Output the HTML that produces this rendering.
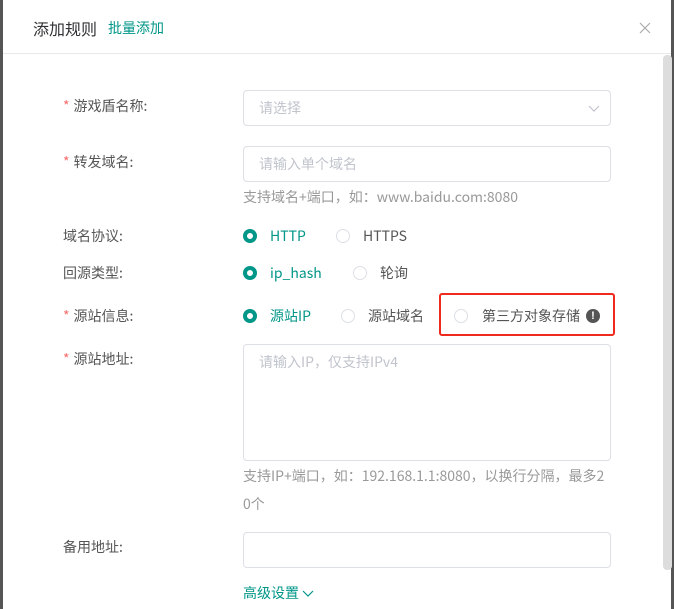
<!DOCTYPE html><html><head><meta charset="utf-8"><style>
*{box-sizing:border-box;margin:0;padding:0}
body{width:674px;height:609px;overflow:hidden;background:#555;font-family:"Noto Sans CJK SC","Liberation Sans",sans-serif;position:relative}
.m{position:absolute;left:3px;top:0;width:668px;height:609px;background:#fff}
.a{position:absolute;font-size:14px;white-space:nowrap;line-height:20px}
.lbl{color:#555;}
.s{color:#f56c6c;margin-right:4px}
.in{position:absolute;left:240px;width:368px;border:1px solid #dcdfe6;border-radius:4px;background:#fff}
.ph{color:#c0c4cc}
.r{position:absolute;width:14px;height:14px;border-radius:50%;border:1px solid #dcdfe6;background:#fff}
.r.on{border:4px solid #009688;background:#fff}
.g{color:#999;font-size:14px}
.t{color:#009688}
</style></head><body>
<div class="m">
<div class="a" style="left:30px;top:17px;font-size:16px;color:#303133;line-height:22px">添加规则</div>
<div class="a t" style="left:105px;top:18px;font-size:14px">批量添加</div>
<svg style="position:absolute;left:636px;top:22px" width="12" height="12"><path d="M1 1L11 11M11 1L1 11" stroke="#aaa" stroke-width="1.2"/></svg>
<div style="position:absolute;left:0;top:53px;width:668px;height:1px;background:#e8e8e8"></div>
<div style="position:absolute;left:660px;top:55px;width:9px;height:515px;background:#ddd;border-radius:4px"></div>

<div class="a lbl" style="left:60px;top:96px"><span class="s">*</span>游戏盾名称:</div>
<div class="in" style="top:90px;height:36px"><span class="a ph" style="left:15px;top:7px">请选择</span>
<svg style="position:absolute;right:10px;top:12px" width="12" height="10"><path d="M1 3l5 5 5-5" fill="none" stroke="#c0c4cc" stroke-width="1.2"/></svg></div>

<div class="a lbl" style="left:60px;top:152px"><span class="s">*</span>转发域名:</div>
<div class="in" style="top:146px;height:36px"><span class="a ph" style="left:15px;top:7px">请输入单个域名</span></div>
<div class="a g" style="left:240px;top:187px">支持域名+端口，如：www.baidu.com:8080</div>

<div class="a lbl" style="left:60px;top:226px">域名协议:</div>
<div class="r on" style="left:240px;top:229px"></div><div class="a t" style="left:267px;top:226px">HTTP</div>
<div class="r" style="left:333px;top:229px"></div><div class="a lbl" style="left:360px;top:226px">HTTPS</div>

<div class="a lbl" style="left:60px;top:263px">回源类型:</div>
<div class="r on" style="left:240px;top:266px"></div><div class="a t" style="left:267px;top:263px">ip_hash</div>
<div class="r" style="left:350px;top:266px"></div><div class="a lbl" style="left:377px;top:263px">轮询</div>

<div class="a lbl" style="left:60px;top:306px"><span class="s">*</span>源站信息:</div>
<div class="r on" style="left:240px;top:309px"></div><div class="a t" style="left:267px;top:306px">源站IP</div>
<div class="r" style="left:338px;top:309px"></div><div class="a lbl" style="left:365px;top:306px">源站域名</div>
<div style="position:absolute;left:436px;top:293px;width:176px;height:43px;border:2px solid #ee2a1e;border-radius:3px"></div>
<div class="r" style="left:451px;top:309px"></div><div class="a lbl" style="left:479px;top:306px">第三方对象存储</div>
<div style="position:absolute;left:583px;top:309px;width:14px;height:14px;border-radius:50%;background:#555;color:#fff;font-size:11px;font-weight:bold;text-align:center;line-height:14px;font-family:'Liberation Sans',sans-serif">!</div>

<div class="a lbl" style="left:60px;top:349px"><span class="s">*</span>源站地址:</div>
<div class="in" style="top:344px;height:117px"><span class="a ph" style="left:15px;top:7px">请输入IP，仅支持IPv4</span></div>
<div class="a g" style="left:240px;top:466px">支持IP+端口，如：192.168.1.1:8080，以换行分隔，最多2</div>
<div class="a g" style="left:240px;top:494px">0个</div>

<div class="a lbl" style="left:60px;top:537px">备用地址:</div>
<div class="in" style="top:532px;height:36px"></div>
<div class="a t" style="left:240px;top:583px">高级设置 <svg width="12" height="10"><path d="M1 3l5 5 5-5" fill="none" stroke="#009688" stroke-width="1.2"/></svg></div>
</div>
</body></html>
